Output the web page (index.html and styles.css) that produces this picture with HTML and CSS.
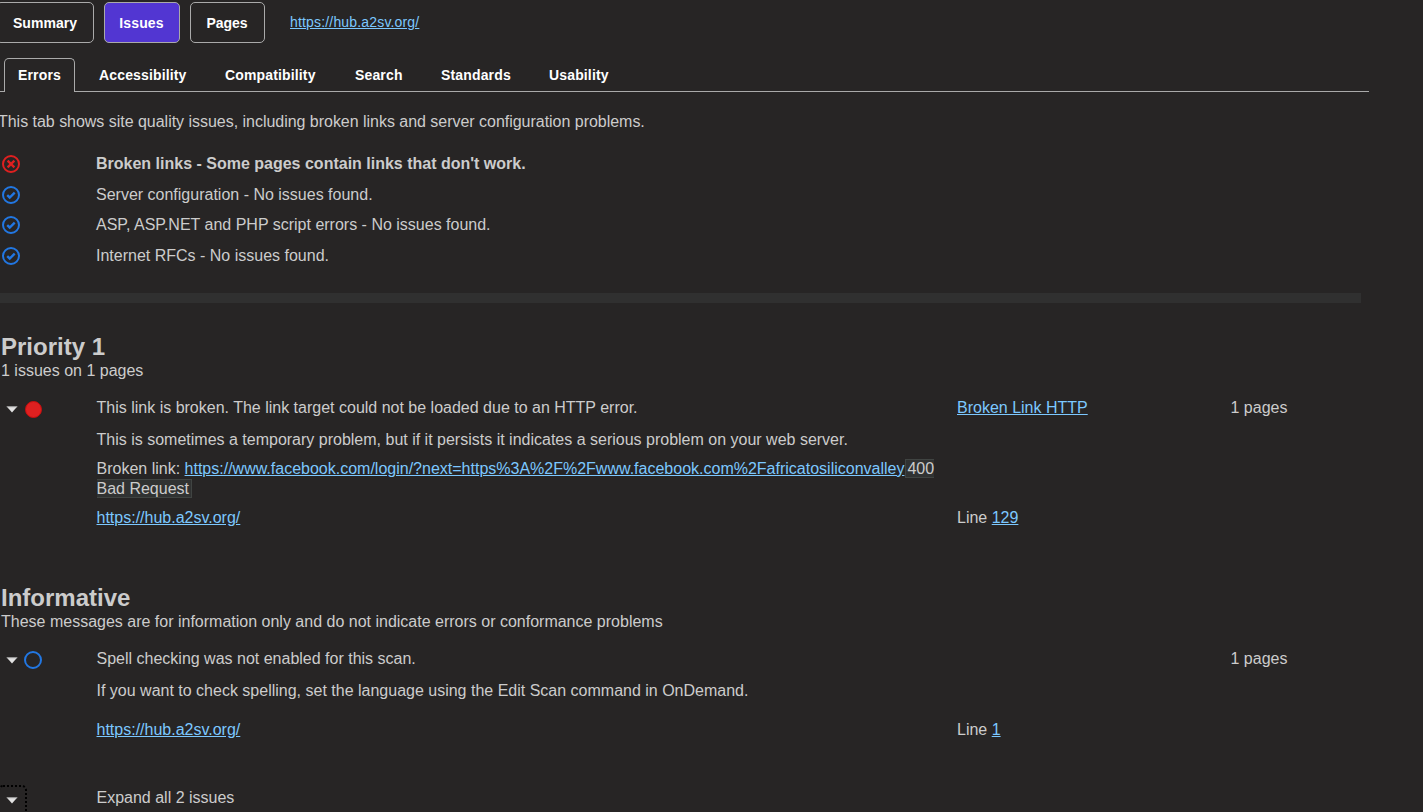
FILE: index.html
```html
<!DOCTYPE html>
<html lang="en">
<head>
<meta charset="utf-8">
<title>Site report - Issues</title>
<link rel="stylesheet" href="styles.css">
</head>
<body>
<svg class="defs" width="0" height="0">
  <symbol id="check" viewBox="0 0 18 18"><circle cx="9" cy="9" r="8" fill="none" stroke="#2277e2" stroke-width="2"/><path d="M5.2 9.2l2.5 2.3 5-4.8" fill="none" stroke="#2277e2" stroke-width="2.4"/></symbol>
  <symbol id="cross" viewBox="0 0 18 18"><circle cx="9" cy="9" r="8" fill="none" stroke="#df2020" stroke-width="2"/><path d="M5.6 5.6l6.8 6.8M12.4 5.6l-6.8 6.8" fill="none" stroke="#df2020" stroke-width="2.3"/></symbol>
  <symbol id="arrow" viewBox="0 0 12 7"><path d="M.7.5h10.6L6 6.5z" fill="#e2e2e2"/><path d="M.7.7h10.6" stroke="#999" stroke-width="1"/></symbol>
</svg>
<nav class="topnav">
  <a class="button summary">Summary</a>
  <a class="button issues">Issues</a>
  <a class="button pages">Pages</a>
  <a class="link site">https://hub.a2sv.org/</a>
</nav>
<div class="tabs">
  <a class="tab active">Errors</a>
  <a class="tab t-access">Accessibility</a>
  <a class="tab t-compat">Compatibility</a>
  <a class="tab t-search">Search</a>
  <a class="tab t-standards">Standards</a>
  <a class="tab">Usability</a>
</div>
<p class="intro">This tab shows site quality issues, including broken links and server configuration problems.</p>
<ul class="summary-list">
  <li class="failed"><svg class="status"><use href="#cross"/></svg><span>Broken links - Some pages contain links that don't work.</span></li>
  <li><svg class="status"><use href="#check"/></svg><span>Server configuration - No issues found.</span></li>
  <li><svg class="status"><use href="#check"/></svg><span>ASP, ASP.NET and PHP script errors - No issues found.</span></li>
  <li><svg class="status"><use href="#check"/></svg><span>Internet RFCs - No issues found.</span></li>
</ul>
<div class="divider"></div>
<section class="group priority">
  <h2>Priority 1</h2>
  <p class="count">1 issues on 1 pages</p>
  <div class="row head">
    <div class="marks"><svg class="arrow"><use href="#arrow"/></svg><span class="dot red"></span></div>
    <div>This link is broken. The link target could not be loaded due to an HTTP error.</div>
    <div><a class="link">Broken Link HTTP</a></div>
    <div>1 pages</div>
  </div>
  <div class="row detail">
    <div class="text">This is sometimes a temporary problem, but if it persists it indicates a serious problem on your web server.</div>
  </div>
  <div class="row target">
    <div class="text">Broken link: <a class="link">https://www.facebook.com/login/?next=https%3A%2F%2Fwww.facebook.com%2Fafricatosiliconvalley</a><span class="code">400 Bad Request</span></div>
  </div>
  <div class="row location">
    <div class="text"><a class="link">https://hub.a2sv.org/</a></div>
    <div>Line <a class="link">129</a></div>
  </div>
</section>
<section class="group informative">
  <h2>Informative</h2>
  <p class="count">These messages are for information only and do not indicate errors or conformance problems</p>
  <div class="row head">
    <div class="marks"><svg class="arrow"><use href="#arrow"/></svg><span class="dot blue"></span></div>
    <div>Spell checking was not enabled for this scan.</div>
    <div></div>
    <div>1 pages</div>
  </div>
  <div class="row detail">
    <div class="text">If you want to check spelling, set the language using the Edit Scan command in OnDemand.</div>
  </div>
  <div class="row location spaced">
    <div class="text"><a class="link">https://hub.a2sv.org/</a></div>
    <div>Line <a class="link">1</a></div>
  </div>
</section>
<div class="row expand">
  <button class="toggle" aria-label="Expand all"><svg class="arrow"><use href="#arrow"/></svg></button>
  <div class="text">Expand all 2 issues</div>
</div>
</body>
</html>
```
FILE: styles.css
```css
* { box-sizing: border-box; }
html { background: #272525; }
body {
  margin: 0;
  height: 812px;
  overflow: hidden;
  background: #272525;
  color: #ccc;
  font: 16px/20px "Liberation Sans", Arial, sans-serif;
}
p, h2, ul { margin: 0; padding: 0; }
.defs { display: block; }
.link { color: #7cc8ff; text-decoration: underline; }
.topnav { display: flex; align-items: flex-start; gap: 10px; padding-top: 2px; }
.button {
  height: 41px;
  border: 1px solid #aaa;
  border-radius: 5px;
  color: #fff;
  font-size: 14px;
  font-weight: bold;
  line-height: 40px;
  text-align: center;
}
.summary { width: 98px; margin-left: -4px; letter-spacing: 0.05px; }
.issues { width: 76px; padding-right: 1px; background: #5236d2; letter-spacing: 0.15px; }
.pages { width: 75px; padding-right: 1px; }
.site { margin: 10px 0 0 15px; font-size: 14px; letter-spacing: 0.17px; }
.tabs {
  display: flex;
  width: 1369px;
  height: 34px;
  margin-top: 15px;
  padding-left: 4px;
  border-bottom: 1px solid #aaa;
  color: #fff;
  font-size: 14px;
  font-weight: bold;
  letter-spacing: 0.15px;
}
.tab { padding-left: 14px; line-height: 34px; }
.active {
  width: 71px;
  height: 34px;
  margin-right: 10px;
  padding-left: 13px;
  border: 1px solid #aaa;
  border-bottom: 0;
  border-radius: 5px 5px 0 0;
  background: #272525;
  line-height: 32px;
}
.t-access { width: 126px; }
.t-compat { width: 130px; }
.t-search { width: 86px; }
.t-standards { width: 108px; }
.intro { margin: 20px 0 0 -2px; letter-spacing: -0.026px; }
.summary-list { margin-top: 22px; list-style: none; }
.summary-list li { display: grid; grid-template-columns: 96px 1fr; height: 31px; }
.summary-list .failed { font-weight: bold; }
.summary-list li:nth-child(2) { height: 30px; }
.status { width: 18px; height: 18px; margin: 1px 0 0 2px; }
.divider { width: 1361px; height: 10px; margin-top: 16px; background: #303030; }
.group h2 { padding-left: 1px; font-size: 24px; line-height: 28px; }
.priority { margin-top: 30px; }
.informative { margin-top: 56px; }
.count { padding-left: 1px; }
.row { display: grid; grid-template-columns: 96.5px 860.5px 273.5px 1fr; }
.head { height: 20px; margin-top: 17px; }
.marks { display: flex; align-items: center; gap: 6px; height: 18px; margin-top: 2px; padding-left: 6px; }
.arrow { width: 12px; height: 7px; }
.dot { width: 18px; height: 18px; border-radius: 50%; }
.red { border: 1px solid #c80e0e; background: #df2020; width: 17px; height: 17px; margin-left: 0.5px; }
.blue { border: 2px solid #2277e2; }
.text { grid-column: 2; }
.detail { margin-top: 12px; }
.target { margin-top: 9px; }
.target .text { width: 846px; }
.code { margin-left: 1px; padding: 0 2px 0 1px; border: 1px solid #404442; background: #303232; }
.location { margin-top: 9px; }
.spaced { margin-top: 19px; }
.expand { margin-top: 45px; }
.toggle {
  display: flex;
  width: 29px;
  height: 40px;
  margin-left: -2px;
  padding: 10px 0 0 6px;
  border: 2px dotted #000;
  border-radius: 5px;
  background: none;
}
.expand .text { margin-top: 3px; }
```
